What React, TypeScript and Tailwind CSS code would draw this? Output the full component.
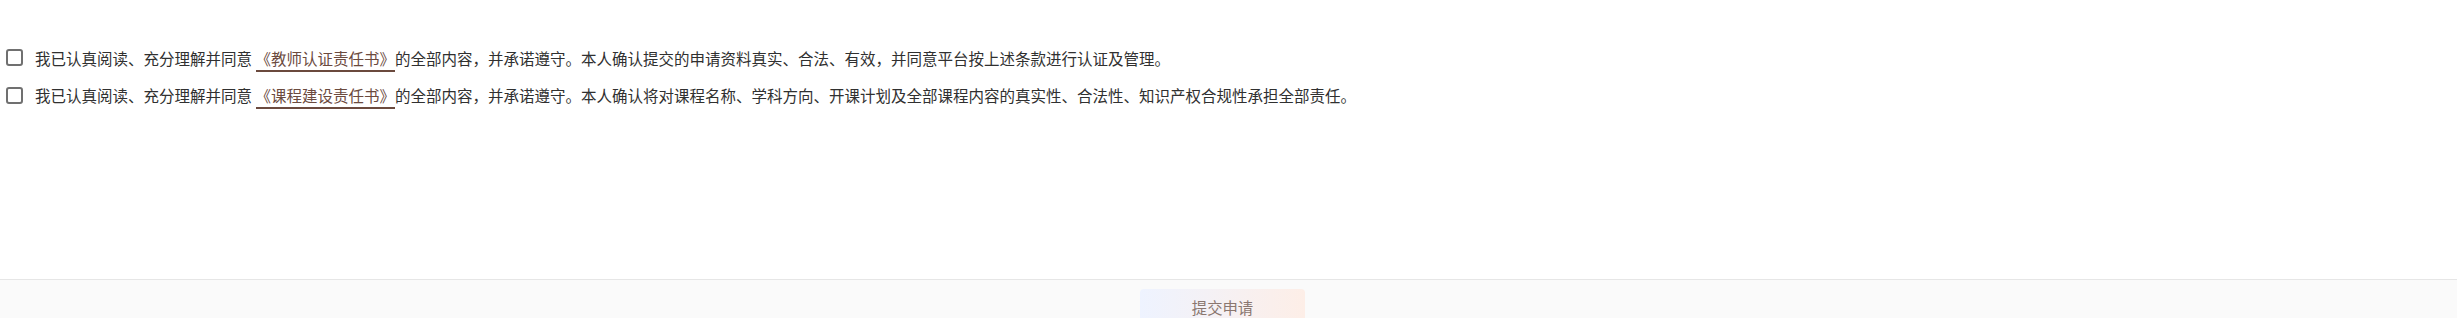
import React from "react";

const font = { fontFamily: '"Noto Sans CJK SC", "Noto Sans", sans-serif' };

function Row({ link, rest }: { link: string; rest: string }) {
  return (
    <div className="flex items-center h-[37.5px]">
      <span className="ml-[6px] w-[17px] h-[17px] shrink-0 rounded-[3px] border-2 border-[#707070] bg-white" />
      <span className="ml-[12px] text-[15.5px] leading-[20px] text-[#303030] whitespace-nowrap">
        我已认真阅读、充分理解并同意{" "}
        <span className="text-[#6b4a3e] border-b-2 border-[#6b4a3e] pb-[1px]">{link}</span>
        {rest}
      </span>
    </div>
  );
}

export default function App() {
  return (
    <div className="w-full bg-white" style={font}>
      <div className="h-[279px] pt-[39px] flex flex-col">
        <Row
          link="《教师认证责任书》"
          rest="的全部内容，并承诺遵守。本人确认提交的申请资料真实、合法、有效，并同意平台按上述条款进行认证及管理。"
        />
        <Row
          link="《课程建设责任书》"
          rest="的全部内容，并承诺遵守。本人确认将对课程名称、学科方向、开课计划及全部课程内容的真实性、合法性、知识产权合规性承担全部责任。"
        />
      </div>
      <div className="border-t border-[#e6e6e6] bg-[#fafafa] h-[60px] flex justify-center pt-[9px]">
        <button className="mr-[12px] w-[165px] h-[38px] rounded-[4px] bg-gradient-to-r from-[#eef3ff] to-[#fdeee7] text-[15.36px] text-[#8a7770]">
          提交申请
        </button>
      </div>
    </div>
  );
}
